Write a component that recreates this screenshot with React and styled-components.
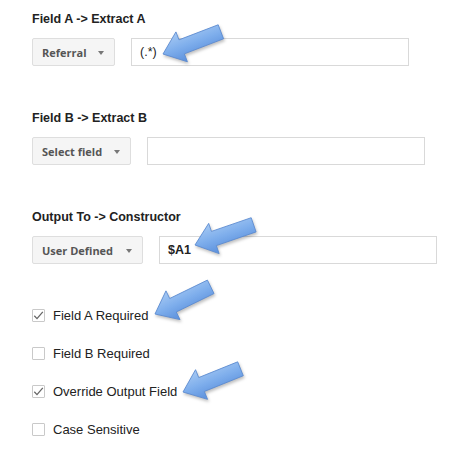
import React from 'react'
import styled, { createGlobalStyle } from 'styled-components';

const TEXT_COLOR = '#222';
const BORDER_COLOR = '#d9d9d9';

const GlobalStyle = createGlobalStyle`
  html, body {
    margin: 0;
    padding: 0;
    background: #ffffff;
  }
`;

const sections = [
  { title: 'Field A -> Extract A', select: 'Referral', selectWidth: 83, value: '(.*)' },
  { title: 'Field B -> Extract B', select: 'Select field', selectWidth: 99, value: '' },
  { title: 'Output To -> Constructor', select: 'User Defined', selectWidth: 111, value: '$A1', strong: true },
];

const options = [
  { label: 'Field A Required', checked: true },
  { label: 'Field B Required', checked: false },
  { label: 'Override Output Field', checked: true },
  { label: 'Case Sensitive', checked: false },
];

const arrows = [
  { id: 'a1', x: 163, y: 54, angle: 21 },
  { id: 'a2', x: 195, y: 245, angle: 19 },
  { id: 'a3', x: 155, y: 314, angle: 26 },
  { id: 'a4', x: 183, y: 392, angle: 22 },
];

function Arrow({ id, x, y, angle }) {
  return (
    <ArrowSvg $x={x} $y={y} width="90" height="70" viewBox="0 0 90 70">
      <defs>
        <linearGradient id={id} x1="0" y1="0" x2="0" y2="1">
          <stop offset="0" stopColor="#a6c9f3" />
          <stop offset="0.5" stopColor="#7eaeec" />
          <stop offset="1" stopColor="#5a8fdc" />
        </linearGradient>
      </defs>
      <g transform={`translate(5,50) rotate(${-angle})`}>
        <polygon
          points="0,0 20,-16 20,-7.5 62,-7.5 62,7.5 20,7.5 20,16"
          fill={`url(#${id})`}
          stroke="#5b8ad0"
          strokeWidth="0.8"
          strokeLinejoin="round"
        />
      </g>
    </ArrowSvg>
  );
}

function Checkbox({ checked }) {
  return (
    <Box>
      {checked && (
        <svg width="13" height="13" viewBox="0 0 13 13">
          <path d="M2.3 6.8 L5 9.6 L10.8 2.8" fill="none" stroke="#666" strokeWidth="1.3" />
        </svg>
      )}
    </Box>
  );
}

function App() {
  return (
    <Page>
      <GlobalStyle />
      {sections.map((s) => (
        <Section key={s.title}>
          <Title>{s.title}</Title>
          <FieldRow>
            <Select $width={s.selectWidth}>
              <span>{s.select}</span>
              <Caret />
            </Select>
            <Input $strong={s.strong}>{s.value}</Input>
          </FieldRow>
        </Section>
      ))}

      <OptionList>
        {options.map((o) => (
          <Option key={o.label}>
            <Checkbox checked={o.checked} />
            <Label>{o.label}</Label>
          </Option>
        ))}
      </OptionList>

      {arrows.map((a) => <Arrow key={a.id} {...a} />)}
    </Page>
  )
}

const Page = styled.div`
  position: relative;
  width: 466px;
  height: 454px;
  overflow: hidden;
  box-sizing: border-box;
  padding: 11px 0 0 32px;
  font-family: "Liberation Sans", Arial, sans-serif;
  color: ${TEXT_COLOR};
`;

const Section = styled.div`
  display: flex;
  flex-direction: column;
  margin-bottom: 44px;
`;

const Title = styled.div`
  font-size: 12.5px;
  line-height: 16px;
  font-weight: 700;
  color: #222;
  margin-bottom: 11px;
`;

const FieldRow = styled.div`
  display: flex;
  align-items: center;
  gap: 16px;
`;

const Select = styled.div`
  display: flex;
  align-items: center;
  justify-content: space-between;
  box-sizing: border-box;
  width: ${(p) => p.$width}px;
  height: 28px;
  padding: 0 10px 0 9px;
  background: #f5f5f5;
  border: 1px solid #dedede;
  border-radius: 2px;
  font-family: "Open Sans", "Liberation Sans", sans-serif;
  font-size: 11px;
  font-weight: 700;
  color: #555;
  white-space: nowrap;
`;

const Caret = styled.span`
  width: 0;
  height: 0;
  border-left: 3px solid transparent;
  border-right: 3px solid transparent;
  border-top: 4px solid #777;
  margin-top: 1px;
`;

const Input = styled.div`
  display: flex;
  align-items: center;
  box-sizing: border-box;
  width: 278px;
  height: 28px;
  padding: 0 8px;
  background: #fff;
  border: 1px solid ${BORDER_COLOR};
  font-size: 12.5px;
  font-weight: ${(p) => (p.$strong ? 700 : 400)};
  color: #222;
`;

const OptionList = styled.div`
  display: flex;
  flex-direction: column;
  gap: 18px;
  margin-top: -3px;
`;

const Option = styled.div`
  display: flex;
  align-items: center;
  height: 20px;
  gap: 8px;
`;

const Box = styled.div`
  box-sizing: border-box;
  width: 13px;
  height: 13px;
  border: 1px solid #c9c9c9;
  border-radius: 1px;
  background: #fff;
  display: flex;
  align-items: center;
  justify-content: center;

  svg {
    display: block;
    flex: none;
  }
`;

const Label = styled.span`
  font-size: 13px;
  color: #222;
`;

const ArrowSvg = styled.svg`
  position: absolute;
  left: ${(p) => p.$x - 5}px;
  top: ${(p) => p.$y - 50}px;
  overflow: visible;
  filter: drop-shadow(1px 2px 1.5px rgba(0, 0, 0, 0.25));
`;

export default App
